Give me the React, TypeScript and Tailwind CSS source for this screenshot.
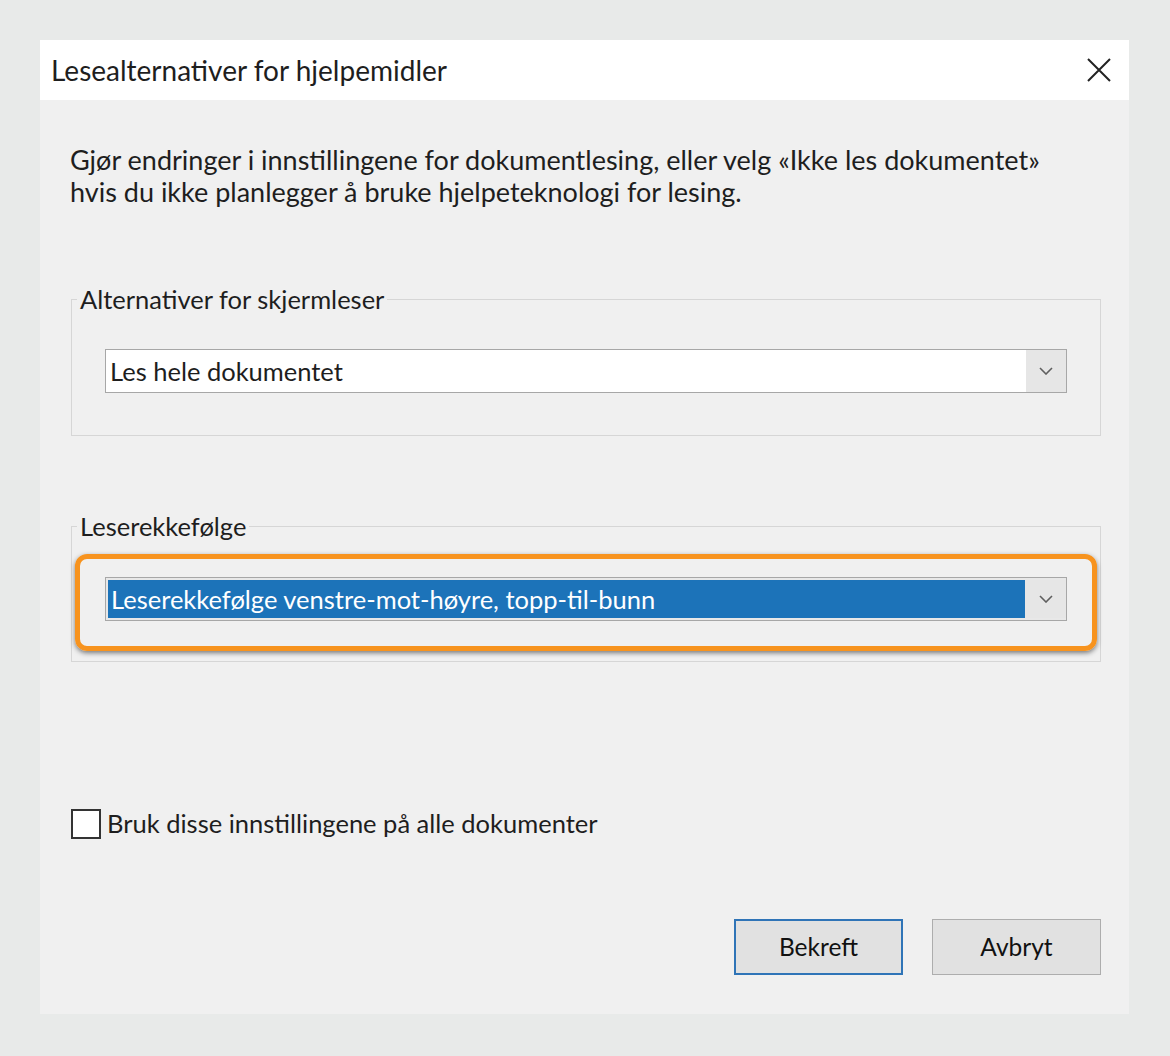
import React from "react";

const font = { fontFamily: "Lato, 'Open Sans', sans-serif" };

function Chevron() {
  return (
    <svg width="14" height="8" viewBox="0 0 14 8" fill="none">
      <path d="M1 1 L7 7 L13 1" stroke="#5f5f5f" strokeWidth="1.6" />
    </svg>
  );
}

export default function App() {
  return (
    <div
      className="w-[1170px] h-[1056px] bg-[#e8eae9] pt-[40px] pl-[40px] text-[#1e1e1e]"
      style={font}
    >
      <div className="w-[1089px] h-[974px] bg-[#f0f0f0] flex flex-col">
        {/* Title bar */}
        <div className="h-[60px] bg-white flex items-center justify-between pl-[11px] pr-[18px]">
          <span className="text-[28px] leading-none">Lesealternativer for hjelpemidler</span>
          <svg width="24" height="24" viewBox="0 0 24 24" fill="none">
            <path d="M1 1 L23 23 M23 1 L1 23" stroke="#222" strokeWidth="2" />
          </svg>
        </div>

        <div className="flex flex-col pl-[31px] pr-[28px] pt-[44px]">
          <p className="text-[27px] leading-[32px] -ml-[1px]">
            Gjør endringer i innstillingene for dokumentlesing, eller velg «Ikke les dokumentet»
            <br />
            hvis du ikke planlegger å bruke hjelpeteknologi for lesing.
          </p>

          {/* Group 1 */}
          <fieldset className="mt-[77px] border border-[#d6d6d6] px-[3px] pt-[36px] pb-[42px] min-w-0">
            <legend className="ml-[2px] px-[3px] text-[25.5px] leading-[28px]">
              Alternativer for skjermleser
            </legend>
            <div className="px-[30px]">
              <div className="h-[44px] border border-[#a7a7a7] bg-white flex items-stretch">
                <div className="flex-1 flex items-center pl-[4px] text-[25.5px]">Les hele dokumentet</div>
                <div className="w-[40px] bg-[#e6e6e6] flex items-center justify-center">
                  <Chevron />
                </div>
              </div>
            </div>
          </fieldset>

          {/* Group 2 */}
          <fieldset className="mt-[76px] border border-[#d6d6d6] px-[3px] pt-[14px] pb-[10px] min-w-0">
            <legend className="ml-[2px] px-[3px] text-[25.5px] leading-[28px]">Leserekkefølge</legend>
            <div className="border-[5px] border-[#f7931e] rounded-[12px] px-[25px] pt-[18px] pb-[25px] shadow-[0_2px_5px_rgba(0,0,0,0.5)]">
              <div className="h-[44px] border border-[#a7a7a7] bg-[#e8e8e8] flex items-stretch p-[2px] pr-0">
                <div className="flex-1 flex items-center bg-[#1c73b9] text-white pl-[3px] text-[25.5px]">
                  Leserekkefølge venstre-mot-høyre, topp-til-bunn
                </div>
                <div className="w-[41px] bg-[#e6e6e6] flex items-center justify-center">
                  <Chevron />
                </div>
              </div>
            </div>
          </fieldset>

          {/* Checkbox */}
          <div className="mt-[147px] flex items-center gap-[6px]">
            <div className="w-[30px] h-[30px] border-2 border-[#333] bg-white" />
            <span className="text-[25.5px] leading-none">Bruk disse innstillingene på alle dokumenter</span>
          </div>

          {/* Buttons */}
          <div className="mt-[80px] flex justify-end gap-[29px]">
            <button className="w-[169px] h-[56px] bg-[#e1e1e1] border-2 border-[#2f74b7] text-[24.5px] text-[#111]">
              Bekreft
            </button>
            <button className="w-[169px] h-[56px] bg-[#e1e1e1] border border-[#adadad] text-[24.5px] text-[#111]">
              Avbryt
            </button>
          </div>
        </div>
      </div>
    </div>
  );
}
